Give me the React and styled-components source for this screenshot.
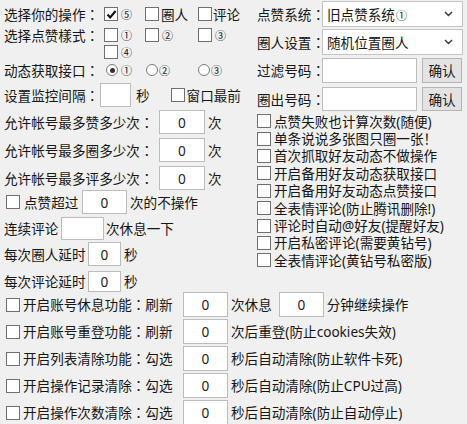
import React from "react";
import styled, { createGlobalStyle } from "styled-components";

const Global = createGlobalStyle`
  html, body { margin: 0; padding: 0; background: #f0f0f0; }
  body {
    font-family: "Noto Sans", "Noto Sans CJK SC", sans-serif;
    font-size: 13.6px;
    color: #161616;
  }
  #root { width: 467px; height: 424px; overflow: hidden; }
`;

const Page = styled.div`
  width: 467px;
  height: 424px;
  overflow: hidden;
  padding-left: 4px;
  box-sizing: border-box;
`;

const Top = styled.div`
  display: grid;
  grid-template-columns: 253px 1fr;
  height: 292px;
`;

const Column = styled.div`
  display: flex;
  flex-direction: column;
`;

const Row = styled.div`
  display: flex;
  align-items: center;
  height: ${(p) => p.$h}px;
  margin-top: ${(p) => p.$mt || 0}px;
  white-space: nowrap;
  line-height: 17px;
`;

const Label = styled.span`
  display: inline-block;
  line-height: 17px;
  width: ${(p) => p.$w}px;
  margin-left: ${(p) => p.$ml || 0}px;
  flex-shrink: 0;
`;

const Text = styled.span`
  display: inline-block;
  line-height: 17px;
  margin-left: ${(p) => p.$ml || 0}px;
`;

const Colon = styled.span`
  font-family: "Noto Sans CJK TC", "Noto Sans CJK SC", sans-serif;
`;

const Opt = styled.span`
  display: inline-flex;
  align-items: center;
  width: ${(p) => (p.$w ? `${p.$w}px` : "auto")};
  flex-shrink: 0;
`;

const Box = styled.span`
  width: 14px;
  height: 14px;
  box-sizing: border-box;
  border: 1px solid #707070;
  background: #fff;
  display: inline-flex;
  align-items: center;
  justify-content: center;
  flex-shrink: 0;
  margin-left: ${(p) => p.$ml || 0}px;
`;

const Radio = styled.span`
  width: 12px;
  height: 12px;
  box-sizing: border-box;
  border: 1px solid #7a7a7a;
  border-radius: 50%;
  background: #fff;
  display: inline-flex;
  align-items: center;
  justify-content: center;
  flex-shrink: 0;
  margin-left: ${(p) => p.$ml || 0}px;
  &::after {
    content: "";
    width: 5px;
    height: 5px;
    border-radius: 50%;
    background: ${(p) => (p.$on ? "#333" : "transparent")};
  }
`;

const Num = styled.span`
  font-family: "Noto Sans CJK SC", sans-serif;
  font-size: 11px;
  line-height: 1;
  margin-left: ${(p) => (p.$ml === undefined ? 3 : p.$ml)}px;
  align-self: ${(p) => (p.$low ? "flex-end" : "auto")};
  margin-bottom: ${(p) => (p.$low ? 1 : 0)}px;
`;

const Field = styled.input`
  width: ${(p) => p.$w}px;
  height: ${(p) => p.$h}px;
  margin-left: ${(p) => p.$ml || 0}px;
  box-sizing: border-box;
  border: 1px solid #bcbcbc;
  background: #fff;
  padding: 0;
  font: inherit;
  color: #222;
  text-align: center;
  outline: none;
  flex-shrink: 0;
`;

const Select = styled.div`
  width: 141px;
  height: 100%;
  box-sizing: border-box;
  border: 1px solid #c4c4c4;
  background: #fff;
  display: flex;
  align-items: center;
  justify-content: space-between;
  padding: 0 9px 0 4px;
`;

const Button = styled.button`
  width: 40px;
  height: 100%;
  margin-left: 5px;
  box-sizing: border-box;
  border: 1px solid #b5b5b5;
  background: #e3e3e3;
  font: inherit;
  color: #1c1c1c;
  padding: 0;
`;

const CheckList = styled.div`
  display: flex;
  flex-direction: column;
  margin-top: 1.5px;
`;

const CheckRow = styled.div`
  display: flex;
  align-items: center;
  height: 17.4px;
  gap: 3px;
  white-space: nowrap;
`;

const ListText = styled.span`
  display: block;
  line-height: 17px;
`;

const Bottom = styled.div`
  display: flex;
  flex-direction: column;
  gap: 2px;
`;

const withColon = (s) => {
  const i = s.indexOf("：");
  if (i < 0) return s;
  return (
    <>
      {s.slice(0, i)}
      <Colon>：</Colon>
      {s.slice(i + 1)}
    </>
  );
};

const Check = ({ on, ml }) => (
  <Box $ml={ml}>
    {on && (
      <svg width="11" height="11" viewBox="0 0 11 11">
        <path d="M1.5 5.6 L4.2 8.4 L9.6 2" fill="none" stroke="#111" strokeWidth="2.1" />
      </svg>
    )}
  </Box>
);

const Chevron = () => (
  <svg width="9" height="6" viewBox="0 0 9 6">
    <path d="M1 1 L4.5 4.5 L8 1" fill="none" stroke="#333" strokeWidth="1.4" />
  </svg>
);

const rightChecks = [
  "点赞失败也计算次数(随便)",
  "单条说说多张图只圈一张！",
  "首次抓取好友动态不做操作",
  "开启备用好友动态获取接口",
  "开启备用好友动态点赞接口",
  "全表情评论(防止腾讯删除!)",
  "评论时自动@好友(提醒好友)",
  "开启私密评论(需要黄钻号)",
  "全表情评论(黄钻号私密版)",
];

const bottomRows = [
  { label: "开启账号休息功能：刷新", after: "次休息", extra: "分钟继续操作" },
  { label: "开启账号重登功能：刷新", after: "次后重登(防止cookies失效)" },
  { label: "开启列表清除功能：勾选", after: "秒后自动清除(防止软件卡死)" },
  { label: "开启操作记录清除：勾选", after: "秒后自动清除(防止CPU过高)" },
  { label: "开启操作次数清除：勾选", after: "秒后自动清除(防止自动停止)" },
];

export default function App() {
  return (
    <>
      <Global />
      <Page>
        <Top>
          <Column>
            <Row $h={24} $mt={2}>
              <Label $w={100}>{withColon("选择你的操作：")}</Label>
              <Opt $w={41}><Check on /><Num>⑤</Num></Opt>
              <Opt $w={53}><Check /><Text $ml={2}>圈人</Text></Opt>
              <Opt><Check /><Text $ml={1}>评论</Text></Opt>
            </Row>
            <Row $h={18}>
              <Label $w={100}>{withColon("选择点赞樣式：")}</Label>
              <Opt $w={41}><Check /><Num>①</Num></Opt>
              <Opt $w={53}><Check /><Num>②</Num></Opt>
              <Opt><Check /><Num>③</Num></Opt>
            </Row>
            <Row $h={16}>
              <Label $w={100} />
              <Opt><Check /><Num $low>④</Num></Opt>
            </Row>
            <Row $h={20}>
              <Label $w={100}>{withColon("动态获取接口：")}</Label>
              <Opt $w={40}><Radio $on $ml={2} /><Num $ml={3}>①</Num></Opt>
              <Opt $w={53}><Radio $ml={2} /><Num $ml={1}>②</Num></Opt>
              <Opt><Radio $ml={1} /><Num $ml={1}>③</Num></Opt>
            </Row>
            <Row $h={30}>
              <Label $w={96}>{withColon("设置监控间隔：")}</Label>
              <Field $w={31} $h={24} readOnly defaultValue="" />
              <Text $ml={5}>秒</Text>
              <Check ml={21} />
              <Text $ml={2}>窗口最前</Text>
            </Row>
            <Row $h={24}>
              <Label $w={155}>{withColon("允许帐号最多赞多少次：")}</Label>
              <Field $w={46} $h={24} readOnly defaultValue="0" />
              <Text $ml={3}>次</Text>
            </Row>
            <Row $h={24} $mt={4}>
              <Label $w={155}>{withColon("允许帐号最多圈多少次：")}</Label>
              <Field $w={46} $h={24} readOnly defaultValue="0" />
              <Text $ml={3}>次</Text>
            </Row>
            <Row $h={24} $mt={4}>
              <Label $w={155}>{withColon("允许帐号最多评多少次：")}</Label>
              <Field $w={46} $h={24} readOnly defaultValue="0" />
              <Text $ml={3}>次</Text>
            </Row>
            <Row $h={24}>
              <Check ml={2} />
              <Label $w={58} $ml={4}>点赞超过</Label>
              <Field $w={45} $h={24} readOnly defaultValue="0" />
              <Text $ml={3}>次的不操作</Text>
            </Row>
            <Row $h={23} $mt={3}>
              <Label $w={57}>连续评论</Label>
              <Field $w={43} $h={23} readOnly defaultValue="" />
              <Text $ml={2}>次休息一下</Text>
            </Row>
            <Row $h={24} $mt={2}>
              <Label $w={84}>每次圈人延时</Label>
              <Field $w={33} $h={24} readOnly defaultValue="0" />
              <Text $ml={3}>秒</Text>
            </Row>
            <Row $h={21} $mt={5}>
              <Label $w={84}>每次评论延时</Label>
              <Field $w={33} $h={21} readOnly defaultValue="0" />
              <Text $ml={3}>秒</Text>
            </Row>
          </Column>

          <Column>
            <Row $h={26} $mt={1}>
              <Label $w={65}>{withColon("点赞系统：")}</Label>
              <Select>
                <span>旧点赞系统<Num $ml={1}>①</Num></span>
                <Chevron />
              </Select>
            </Row>
            <Row $h={26} $mt={2}>
              <Label $w={65}>{withColon("圈人设置：")}</Label>
              <Select>
                <span>随机位置圈人</span>
                <Chevron />
              </Select>
            </Row>
            <Row $h={25} $mt={3}>
              <Label $w={65}>{withColon("过滤号码：")}</Label>
              <Field $w={95} $h={25} readOnly defaultValue="" />
              <Button>确认</Button>
            </Row>
            <Row $h={24} $mt={4}>
              <Label $w={65}>{withColon("圈出号码：")}</Label>
              <Field $w={95} $h={24} readOnly defaultValue="" />
              <Button>确认</Button>
            </Row>
            <CheckList>
              {rightChecks.map((t) => (
                <CheckRow key={t}>
                  <Check />
                  <ListText>{t}</ListText>
                </CheckRow>
              ))}
            </CheckList>
          </Column>
        </Top>

        <Bottom>
          {bottomRows.map((r) => (
            <Row $h={25} key={r.label}>
              <Check ml={2} />
              <Label $w={160} $ml={3}>{withColon(r.label)}</Label>
              <Field $w={45} $h={25} readOnly defaultValue="0" />
              <Text $ml={3}>{r.after}</Text>
              {r.extra && (
                <>
                  <Field $w={45} $h={25} $ml={7} readOnly defaultValue="0" />
                  <Text $ml={3}>{r.extra}</Text>
                </>
              )}
            </Row>
          ))}
        </Bottom>
      </Page>
    </>
  );
}
